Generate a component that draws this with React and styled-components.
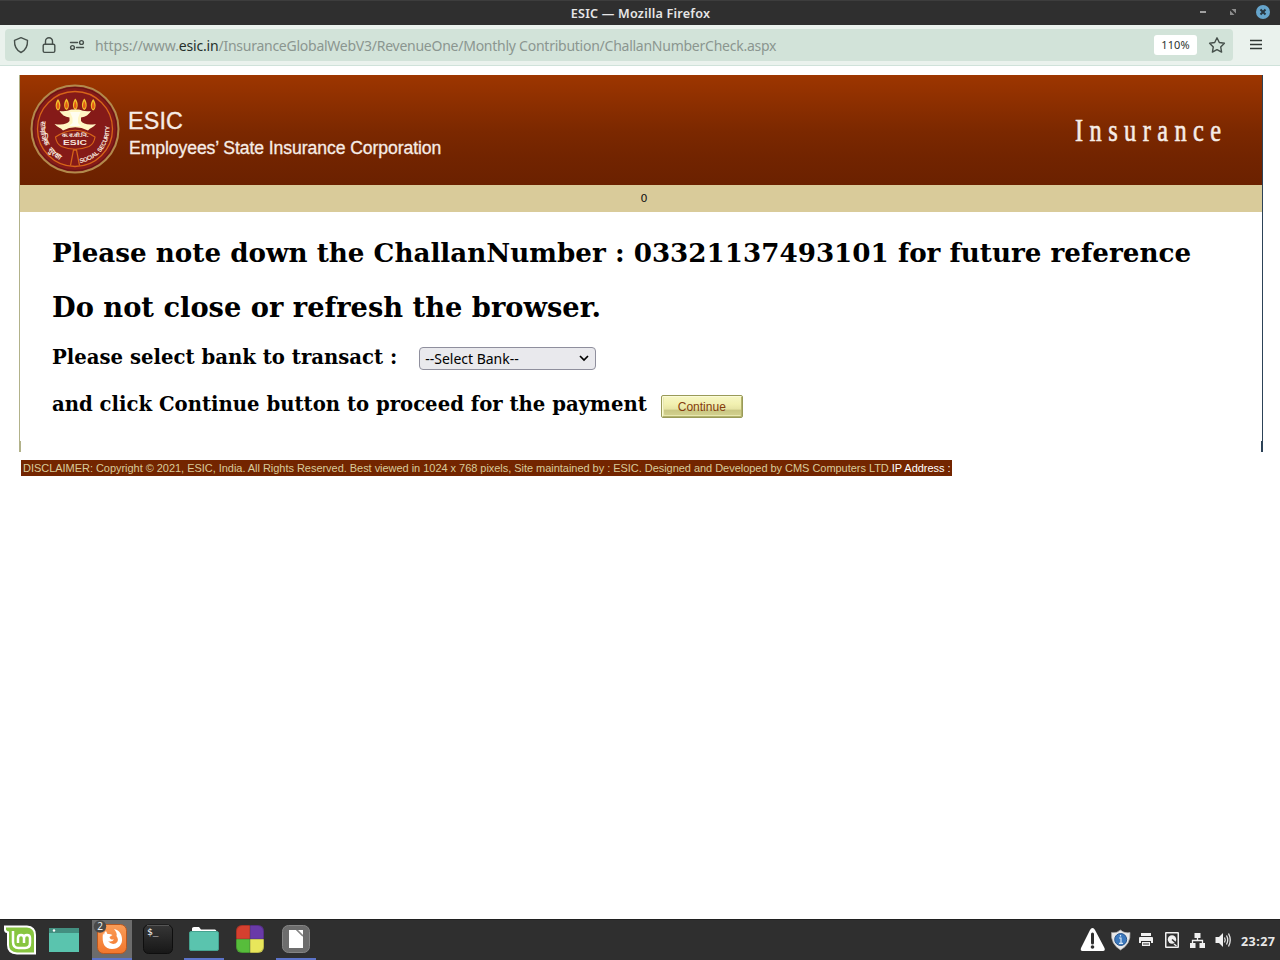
import React from 'react';
import styled, { createGlobalStyle } from 'styled-components';

const Global = createGlobalStyle`
  * { box-sizing: border-box; }
  body { margin: 0; background: #fff; }
`;

const Screen = styled.div`
  width: 1280px;
  height: 960px;
  display: flex;
  flex-direction: column;
  overflow: hidden;
  background: #fff;
  font-family: "Noto Sans", sans-serif;
  white-space: nowrap;
`;

/* window chrome */
const TitleBar = styled.header`
  display: grid;
  grid-template-columns: 1fr auto 1fr;
  align-items: start;
  height: 25px;
  flex: none;
  background: #2f2f2f;
  border-top: 1px solid #3d3d3d;
  color: #e6e6e6;
`;
const WindowTitle = styled.div`
  grid-column: 2;
  padding-left: 1px;
  font: 600 12.6px/25px "Noto Sans", sans-serif;
  letter-spacing: 0.21px;
`;
const WindowButtons = styled.div`
  justify-self: end;
  height: 24px;
  svg { display: block; }
`;
const Toolbar = styled.div`
  display: flex;
  align-items: center;
  height: 41px;
  flex: none;
  padding: 0 5px 1px;
  background: #eaf2ed;
  border-bottom: 1px solid #cfe2da;
`;
const AddressBar = styled.div`
  display: flex;
  align-items: center;
  width: 1228px;
  height: 32px;
  background: #d2e3d9;
  border-radius: 4px;
  padding-left: 8px;
`;
const AddressIcons = styled.svg`
  flex: none;
  width: 76px;
  height: 32px;
`;
const Url = styled.div`
  padding: 2px 0 0 6px;
  flex: 1;
  font: 14px/32px "Noto Sans", sans-serif;
  letter-spacing: -0.25px;
  color: #8b9690;
`;
const UrlScheme = styled.span`
  letter-spacing: -0.05px;
`;
const UrlHost = styled.span`
  color: #26302b;
  letter-spacing: -0.2px;
`;
const Zoom = styled.div`
  width: 43px;
  height: 20px;
  margin-right: 10px;
  border-radius: 3px;
  background: #fff;
  color: #2d3530;
  text-align: center;
  font: 11px/20px "Noto Sans", sans-serif;
  letter-spacing: 0.15px;
`;
const Star = styled.svg`
  width: 20px;
  height: 20px;
  margin-right: 6px;
`;
const Menu = styled.svg`
  width: 16px;
  height: 16px;
  margin-left: 15px;
`;

/* web page */
const Page = styled.main`
  flex: 1;
  padding: 9px 17px 0 19px;
`;
const Frame = styled.section`
  width: 1244px;
  height: 366px;
  border-left: 1px solid #b2b28a;
  border-right: 1px solid #2c4257;
`;
const FrameFoot = styled.div`
  width: 1244px;
  height: 11px;
  border-left: 2px solid #b2b28a;
  border-right: 2px solid #2c4257;
`;
const Banner = styled.div`
  display: flex;
  height: 110px;
  background: linear-gradient(#9d3600 0%, #973300 10%, #7b2800 52%, #722400 75%, #6b2100 100%);
  color: #f6ece6;
`;
const Emblem = styled.svg`
  width: 90px;
  height: 90px;
  margin: 9px 0 0 10px;
`;
const Organisation = styled.div`
  flex: 1;
  padding: 31px 0 0 8px;
  font-family: "Liberation Sans", Arial, sans-serif;
`;
const ShortName = styled.div`
  font-size: 23.3px;
  line-height: 30px;
  letter-spacing: 0.15px;
  -webkit-text-stroke: 0.3px currentColor;
`;
const FullName = styled.div`
  padding-left: 1px;
  font-size: 17.6px;
  line-height: 24px;
  letter-spacing: ${p => p.$tracking}px;
  -webkit-text-stroke: 0.3px currentColor;
`;
const SectionName = styled.div`
  width: 153px;
  height: 40px;
  margin: 36px 34px 0 0;
  font: 31px/40px "Liberation Serif", serif;
  letter-spacing: 8.2px;
  transform: scaleX(0.785);
  transform-origin: 0 50%;
  -webkit-text-stroke: 0.6px currentColor;
`;
const CountStrip = styled.div`
  height: 27px;
  padding-left: 6px;
  background: #d9cb9a;
  color: #111;
  text-align: center;
  font: 11px/27px "DejaVu Sans", sans-serif;
`;
const Notice = styled.div`
  padding: 0 0 0 32px;
  color: #000;
  font-family: "DejaVu Serif", serif;
`;
const Line = styled.div`
  display: flex;
  align-items: center;
  height: ${p => p.$height}px;
  font-weight: 700;
  font-size: ${p => p.$size}px;
  padding-top: ${p => p.$top || 0}px;
`;
const BankSelect = styled.div`
  display: flex;
  align-items: center;
  justify-content: space-between;
  width: 177px;
  height: 23px;
  margin: 1px 0 0 22px;
  padding: 0 6px 0 5px;
  border: 1px solid #8f8f9d;
  border-radius: 4px;
  background: #e9e9ed;
  color: #000;
  font: 14px/21px "Noto Sans", sans-serif;
  letter-spacing: -0.02px;
`;
const ContinueButton = styled.button`
  width: 82px;
  height: 23px;
  margin: 3px 0 0 14px;
  padding: 1px 0 0;
  border: 1px solid #999a58;
  border-radius: 2px;
  background: linear-gradient(#f7f7c4 0%, #f1f0b0 40%, #e6e4a4 62%, #c9c783 68%, #d5d391 100%);
  box-shadow: inset 1px 1px #fbfbd8, inset -1px -1px #b3b36d, inset 2px -2px #e8e8b0;
  color: #843c0c;
  font: 12px/20px "Liberation Sans", Arial, sans-serif;
`;
const Disclaimer = styled.footer`
  width: 931px;
  height: 16px;
  margin: 8px 0 0 2px;
  padding-left: 2px;
  background: #732500;
  color: #d9cb9a;
  font: 11px/16px "Liberation Sans", Arial, sans-serif;
  letter-spacing: ${p => p.$tracking}px;
  span { color: #fff; }
`;

/* desktop panel */
const Taskbar = styled.nav`
  display: flex;
  justify-content: space-between;
  height: 41px;
  flex: none;
  background: #2f2f2f;
  border-top: 1px solid #202020;
`;
const Launchers = styled.div`
  display: flex;
  gap: 6px;
`;
const Launcher = styled.div`
  width: 40px;
  height: 40px;
  background: ${p => (p.$active ? '#6c6c6c' : 'transparent')};
  border-bottom: 2px solid ${p => (p.$running ? '#5c73c8' : 'transparent')};
  svg { display: block; width: 40px; height: 38px; overflow: visible; }
`;
const Tray = styled.div`
  display: flex;
  align-items: center;
  svg { display: block; }
`;
const Clock = styled.time`
  width: 39px;
  padding-top: 3px;
  color: #e8e8e8;
  font: 700 12.5px/16px "Noto Sans", sans-serif;
  letter-spacing: 0.45px;
`;

const flameCentres = [28, 36.5, 45.3, 54.3, 63.2];
const FlameRow = () => flameCentres.map((x, i) => (
  <g key={x} transform={`translate(${x} ${i % 4 === 0 ? 21 : 20.5})`}>
    <path d="M0-6C3.300-2 3 4 0 5.500C-3 4-3.300-2 0-6Z" fill="#f4c52c" />
    <path d="M0-3.500C2 0 1.600 4 0 4S-2 0 0-3.500Z" fill="#e45b16" />
  </g>
));

const EsicEmblem = () => (
  <Emblem viewBox="0 0 90 90" aria-label="ESIC emblem">
    <defs>
      <path id="leftArc" d="M11.500 37A34.500 34.500 0 0 0 40 79" />
      <path id="rightArc" d="M50 79A34.500 34.500 0 0 0 78.500 37" />
    </defs>
    <circle cx="45" cy="45" r="43.500" fill="#851a18" stroke="#b28a4c" strokeWidth="2" />
    <circle cx="45" cy="45" r="41.500" fill="none" stroke="#641414" strokeWidth="1" />
    <circle cx="45" cy="45" r="37.500" fill="none" stroke="#d66519" strokeWidth="1.300" />
    <FlameRow />
    <path d="M29.500 27Q36 28 41.500 25.500H49Q54 28 61 27Q58 32.500 51 33.500V37C53 40 58 41.500 66 40C64 43 60 44 58 46.500Q45 40 33 46.500C31 44 27 43 24.500 40C32 41.500 37.500 40 39.500 37V33.500Q32.500 32.500 29.500 27Z" fill="#fff6c4" />
    <path d="M40 28H50.500L48 34V39L51 42H39L42.500 39V34Z" fill="#fffdf0" />
    <path d="M25.500 53Q45 39.500 65 53Q64 60 59 62.500Q45 68 31.500 62.500Q26.500 60 25.500 53Z" fill="#851a18" stroke="#d66519" strokeWidth="1.200" />
    <path d="M43.500 66L40.500 81.500M46.500 66L49.500 81.500M43 66H47" fill="none" stroke="#d66519" strokeWidth="1.300" />
    <g fill="#f7e6da" fontFamily='"Liberation Sans", sans-serif' fontWeight="700">
      <text x="45" y="61" fontSize="7" textAnchor="middle" textLength="24" lengthAdjust="spacingAndGlyphs">ESIC</text>
      <text x="45" y="53.300" fontSize="5.200" textAnchor="middle" textLength="27" lengthAdjust="spacingAndGlyphs">क.रा.बी.नि.</text>
      <text fontSize="7.200" wordSpacing="3"><textPath href="#leftArc">सामाजिक सुरक्षा</textPath></text>
      <text fontSize="6.200"><textPath href="#rightArc" textLength="52">SOCIAL SECURITY</textPath></text>
    </g>
  </Emblem>
);

export default function App() {
  return (
    <Screen>
      <Global />
      <TitleBar>
        <WindowTitle>ESIC — Mozilla Firefox</WindowTitle>
        <WindowButtons>
          <svg width="86" height="24" viewBox="0 0 86 24">
            <path d="M6 11H12" stroke="#a0a0a0" strokeWidth="2" />
            <path d="M37.500 8H42V12.500ZM36 9.500V14H40.500Z" fill="#8d8d8d" />
            <circle cx="69" cy="11" r="7" fill="#66a5cc" />
            <path d="M66.500 8.500L71.500 13.500M71.500 8.500L66.500 13.500" stroke="#273640" strokeWidth="2" />
          </svg>
        </WindowButtons>
      </TitleBar>
      <Toolbar>
        <AddressBar>
          <AddressIcons viewBox="13 29 76 32" fill="none" stroke="#46504b" strokeWidth="1.400" strokeLinejoin="round" strokeLinecap="round">
            <path d="M21 37.700L27.500 40.300C27.700 46 25.500 50.500 21 52.500C16.500 50.500 14.300 46 14.500 40.300Z" />
            <rect x="43.200" y="44.200" width="11.600" height="8.200" rx="1.400" />
            <path d="M45.500 44V41.200A3.500 3.500 0 0 1 52.500 41.200V44" />
            <path d="M70.500 42.500H77.500M76.500 47.500H83.500" />
            <circle cx="81.500" cy="42.500" r="1.900" />
            <circle cx="72.500" cy="47.500" r="1.900" />
          </AddressIcons>
          <Url><UrlScheme>https://www.</UrlScheme><UrlHost>esic.in</UrlHost>/InsuranceGlobalWebV3/RevenueOne/Monthly Contribution/ChallanNumberCheck.aspx</Url>
          <Zoom>110%</Zoom>
          <Star viewBox="0 0 20 20" fill="none" stroke="#46504b" strokeWidth="1.400" strokeLinejoin="round">
            <path d="M10 2.800L12.300 7.500L17.400 8.200L13.700 11.900L14.600 17.100L10 14.600L5.400 17.100L6.300 11.900L2.600 8.200L7.700 7.500Z" />
          </Star>
        </AddressBar>
        <Menu viewBox="0 0 16 16" stroke="#303834" strokeWidth="1.300"><path d="M2 3.500H14M2 7.500H14M2 11.500H14" /></Menu>
      </Toolbar>

      <Page>
        <Frame>
          <Banner>
            <EsicEmblem />
            <Organisation>
              <ShortName>ESIC</ShortName>
              <FullName $tracking={-0.08}>Employees’ State Insurance Corporation</FullName>
            </Organisation>
            <SectionName>Insurance</SectionName>
          </Banner>
          <CountStrip>0</CountStrip>
          <Notice>
            <Line $size={26.2} $height={54} $top={27}>Please note down the ChallanNumber : 03321137493101 for future reference</Line>
            <Line $size={27.28} $height={54} $top={28}>Do not close or refresh the browser.</Line>
            <Line $size={19.68} $height={46} $top={29}>
              Please select bank to transact :
              <BankSelect>
                --Select Bank--
                <svg width="10" height="8" viewBox="0 0 10 8"><path d="M1 2L5 6L9 2" fill="none" stroke="#000" strokeWidth="1.700" /></svg>
              </BankSelect>
            </Line>
            <Line $size={19.66} $height={46} $top={31}>
              and click Continue button to proceed for the payment
              <ContinueButton>Continue</ContinueButton>
            </Line>
          </Notice>
        </Frame>
        <FrameFoot />
        <Disclaimer $tracking={-0.036}>DISCLAIMER: Copyright © 2021, ESIC, India. All Rights Reserved. Best viewed in 1024 x 768 pixels, Site maintained by : ESIC. Designed and Developed by CMS Computers LTD.<span>IP Address :</span></Disclaimer>
      </Page>

      <Taskbar>
        <Launchers>
          <Launcher>
            <svg viewBox="0 0 40 38">
              <path d="M4 5.500H27Q36 6 36 15V34.500H17Q7 34 7 25V13Q4.500 13 4 10Z" fill="#fff" />
              <path d="M6 7.500H27Q34 8 34 15V32.500H17Q9 32 9 25V11.500Q6.500 11.500 6 9.500Z" fill="#87c540" />
              <path d="M13 11V22Q13 28 18.500 28H25Q30 28 30 23V18Q30 15 27 15T24 18V23M24 18Q24 15 21 15T18 18V23" fill="none" stroke="#fff" strokeWidth="2.500" />
            </svg>
          </Launcher>
          <Launcher>
            <svg viewBox="0 0 40 38">
              <rect x="3" y="8" width="30" height="24" fill="#5ac4ae" />
              <rect x="3" y="8" width="30" height="5" fill="#438f80" />
              <circle cx="8" cy="10.500" r="1.200" fill="#fff" />
            </svg>
          </Launcher>
          <Launcher $active $running>
            <svg viewBox="0 0 40 38">
              <defs><linearGradient id="fox" x2="0" y2="1"><stop stopColor="#fb9d58" /><stop offset="1" stopColor="#f2762c" /></linearGradient></defs>
              <rect x="5.500" y="4.500" width="29" height="29" rx="6" fill="url(#fox)" stroke="#b9581f" />
              <path transform="translate(0 -1)" d="M11 14C9.500 25 13 30 20 30S30.500 25 30 20C30 15 27 11 22 10Q25.500 14 24.500 17Q28 22 23.500 24.500Q19 26 16 22Q20 23.500 22 20.500Q18 21 17.500 18L20.500 16Q18 14.500 15.500 15L14 12Q12 13 12 16Z" fill="#fff" />
              <circle cx="8" cy="6.500" r="6.200" fill="#494949" />
              <text x="8" y="10" fill="#eee" fontSize="10" fontFamily="Noto Sans, sans-serif" textAnchor="middle">2</text>
            </svg>
          </Launcher>
          <Launcher>
            <svg viewBox="0 0 40 38">
              <defs><linearGradient id="term" x2="0" y2="1"><stop stopColor="#363636" /><stop offset="1" stopColor="#171717" /></linearGradient></defs>
              <rect x="5.500" y="5" width="29" height="28.500" rx="5" fill="url(#term)" stroke="#0e0e0e" />
              <path d="M9 5.500H31" stroke="#555" />
              <text x="9" y="14.500" fill="#fff" fontSize="9.500" fontFamily="DejaVu Sans Mono, monospace">$_</text>
            </svg>
          </Launcher>
          <Launcher $running>
            <svg viewBox="0 0 40 38">
              <path d="M8 12V8.500Q8 7 10 7H15L17 9.500H31Q32.500 9.500 32.500 12Z" fill="#fff" />
              <rect x="5.500" y="11.500" width="29" height="19" rx="1.500" fill="#5ac4ae" stroke="#45a28f" />
            </svg>
          </Launcher>
          <Launcher>
            <svg viewBox="0 0 40 38">
              <defs><clipPath id="tiles"><rect x="6" y="5" width="28" height="28" rx="6" /></clipPath></defs>
              <g clipPath="url(#tiles)">
                <rect x="6" y="5" width="14" height="14" fill="#d5402f" />
                <rect x="20" y="5" width="14" height="14" fill="#693aa8" />
                <rect x="6" y="19" width="14" height="14" fill="#57bd3b" />
                <rect x="20" y="19" width="14" height="14" fill="#e8e65b" />
                <path d="M20 5V33M6 19H34" stroke="#333" strokeOpacity=".35" />
              </g>
              <rect x="6.500" y="5.500" width="27" height="27" rx="5.500" fill="none" stroke="#000" strokeOpacity=".2" />
            </svg>
          </Launcher>
          <Launcher $running>
            <svg viewBox="0 0 40 38">
              <rect x="6.500" y="5.500" width="27" height="27" rx="6" fill="#6d6d6d" stroke="#858585" />
              <path d="M13 10H21L27 16V28H13Z" fill="#fff" />
              <path d="M20.500 10L27 16.500" stroke="#555" />
              <path d="M22 10H27V15Z" fill="#fff" />
            </svg>
          </Launcher>
        </Launchers>
        <Tray>
          <svg width="161" height="40" viewBox="1080 920 161 40">
            <path d="M1092.500 928Q1094 928 1095 930L1104.500 948Q1105.500 951 1103 951H1082.500Q1080 951 1081 948L1090 930Q1091 928 1092.500 928Z" fill="#fff" />
            <path d="M1092.500 934V943" stroke="#2f2f2f" strokeWidth="3" strokeLinecap="round" /><circle cx="1092.500" cy="947" r="1.800" fill="#2f2f2f" />
            <path d="M1120.500 930Q1124 933.500 1130 932.500Q1131 944 1120.500 950Q1110.500 944 1111.500 932.500Q1117 933.500 1120.500 930Z" fill="#e9e9e9" stroke="#aaa" strokeWidth=".7" />
            <circle cx="1120.700" cy="939.500" r="6" fill="#3c79bd" stroke="#29568d" />
            <path d="M1119 938H1121V943M1119 943.300H1123M1120.500 935V936.500" fill="none" stroke="#d5e5f5" strokeWidth="1.200" />
            <g fill="#f0f0f0">
              <path d="M1141 933H1151V936H1141ZM1140 937H1152Q1153 937 1153 938V943H1151V941H1141V943H1139V938Q1139 937 1140 937ZM1142 942H1150V946H1142Z" />
              <path d="M1166 932H1178Q1179 932 1179 933V947Q1179 948 1178 948H1166Q1165 948 1165 947V933Q1165 932 1166 932ZM1166.500 933.500V946.500H1177.500V933.500Z" fillRule="evenodd" />
              <path d="M1194.500 933H1200.500V938H1194.500ZM1190 943H1195.500V948H1190ZM1199.500 943H1205V948H1199.500Z" />
              <path d="M1215.500 937H1219L1223 933V947L1219 943H1215.500Z" />
            </g>
            <path d="M1143 944H1149" stroke="#2f2f2f" />
            <circle cx="1172" cy="939.500" r="4.200" fill="#f0f0f0" /><path d="M1172 939.500L1176 943" stroke="#2f2f2f" strokeWidth="1.600" /><path d="M1174 944L1176.500 946" stroke="#f0f0f0" strokeWidth="1.400" />
            <path d="M1197.500 938V941M1192.500 943V940.500H1202.500V943" fill="none" stroke="#f0f0f0" strokeWidth="1.300" />
            <path d="M1224.500 937.500Q1226 940 1224.500 942.500M1226.500 935.500Q1229 940 1226.500 944.500M1228.500 933.500Q1232 940 1228.500 946.500" fill="none" stroke="#e5e5e5" strokeWidth="1.300" />
          </svg>
          <Clock>23:27</Clock>
        </Tray>
      </Taskbar>
    </Screen>
  );
}
